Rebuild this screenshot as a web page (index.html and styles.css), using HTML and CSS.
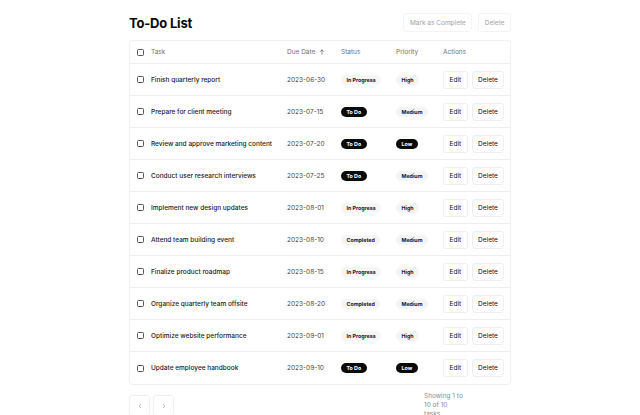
FILE: index.html
```html
<!DOCTYPE html>
<html lang="en">
<head>
<meta charset="utf-8">
<title>To-Do List</title>
<link rel="stylesheet" href="styles.css">
</head>
<body>
<div class="page">
  <div class="topbar">
    <h1 class="title">To-Do List</h1>
    <div class="top-actions">
      <button class="btn btn-muted">Mark as Complete</button>
      <button class="btn btn-muted">Delete</button>
    </div>
  </div>
  <div class="table">
    <div class="row head">
      <div class="cell"><span class="cb"></span></div>
      <div class="cell">Task</div>
      <div class="cell">Due Date <svg class="arrow" viewBox="0 0 10 10" width="6" height="6"><path d="M5 8.5V1.5M2.5 4L5 1.5 7.5 4" fill="none" stroke="currentColor" stroke-width="1.1" stroke-linecap="round" stroke-linejoin="round"/></svg></div>
      <div class="cell">Status</div>
      <div class="cell">Priority</div>
      <div class="cell">Actions</div>
    </div>
    <div class="row"><div class="cell"><span class="cb"></span></div><div class="cell task">Finish quarterly report</div><div class="cell date">2023-06-30</div><div class="cell"><span class="badge light">In Progress</span></div><div class="cell"><span class="badge light">High</span></div><div class="cell acts"><button class="btn">Edit</button><button class="btn">Delete</button></div></div>
    <div class="row"><div class="cell"><span class="cb"></span></div><div class="cell task">Prepare for client meeting</div><div class="cell date">2023-07-15</div><div class="cell"><span class="badge dark">To Do</span></div><div class="cell"><span class="badge light">Medium</span></div><div class="cell acts"><button class="btn">Edit</button><button class="btn">Delete</button></div></div>
    <div class="row"><div class="cell"><span class="cb"></span></div><div class="cell task">Review and approve marketing content</div><div class="cell date">2023-07-20</div><div class="cell"><span class="badge dark">To Do</span></div><div class="cell"><span class="badge dark">Low</span></div><div class="cell acts"><button class="btn">Edit</button><button class="btn">Delete</button></div></div>
    <div class="row"><div class="cell"><span class="cb"></span></div><div class="cell task">Conduct user research interviews</div><div class="cell date">2023-07-25</div><div class="cell"><span class="badge dark">To Do</span></div><div class="cell"><span class="badge light">Medium</span></div><div class="cell acts"><button class="btn">Edit</button><button class="btn">Delete</button></div></div>
    <div class="row"><div class="cell"><span class="cb"></span></div><div class="cell task">Implement new design updates</div><div class="cell date">2023-08-01</div><div class="cell"><span class="badge light">In Progress</span></div><div class="cell"><span class="badge light">High</span></div><div class="cell acts"><button class="btn">Edit</button><button class="btn">Delete</button></div></div>
    <div class="row"><div class="cell"><span class="cb"></span></div><div class="cell task">Attend team building event</div><div class="cell date">2023-08-10</div><div class="cell"><span class="badge light">Completed</span></div><div class="cell"><span class="badge light">Medium</span></div><div class="cell acts"><button class="btn">Edit</button><button class="btn">Delete</button></div></div>
    <div class="row"><div class="cell"><span class="cb"></span></div><div class="cell task">Finalize product roadmap</div><div class="cell date">2023-08-15</div><div class="cell"><span class="badge light">In Progress</span></div><div class="cell"><span class="badge light">High</span></div><div class="cell acts"><button class="btn">Edit</button><button class="btn">Delete</button></div></div>
    <div class="row"><div class="cell"><span class="cb"></span></div><div class="cell task">Organize quarterly team offsite</div><div class="cell date">2023-08-20</div><div class="cell"><span class="badge light">Completed</span></div><div class="cell"><span class="badge light">Medium</span></div><div class="cell acts"><button class="btn">Edit</button><button class="btn">Delete</button></div></div>
    <div class="row"><div class="cell"><span class="cb"></span></div><div class="cell task">Optimize website performance</div><div class="cell date">2023-09-01</div><div class="cell"><span class="badge light">In Progress</span></div><div class="cell"><span class="badge light">High</span></div><div class="cell acts"><button class="btn">Edit</button><button class="btn">Delete</button></div></div>
    <div class="row last"><div class="cell"><span class="cb"></span></div><div class="cell task">Update employee handbook</div><div class="cell date">2023-09-10</div><div class="cell"><span class="badge dark">To Do</span></div><div class="cell"><span class="badge dark">Low</span></div><div class="cell acts"><button class="btn">Edit</button><button class="btn">Delete</button></div></div>
  </div>
  <div class="footer">
    <div class="pager">
      <button class="pbtn" aria-label="Previous"><svg viewBox="0 0 10 10" width="6" height="6"><path d="M6.5 2L3.5 5l3 3" fill="none" stroke="currentColor" stroke-width="1.2" stroke-linecap="round" stroke-linejoin="round"/></svg></button>
      <button class="pbtn" aria-label="Next"><svg viewBox="0 0 10 10" width="6" height="6"><path d="M3.5 2l3 3-3 3" fill="none" stroke="currentColor" stroke-width="1.2" stroke-linecap="round" stroke-linejoin="round"/></svg></button>
    </div>
    <div class="showing">Showing 1 to 10 of 10 tasks</div>
  </div>
</div>
</body>
</html>
```
FILE: styles.css
```css
* { box-sizing: border-box; }
html, body { margin: 0; padding: 0; background: #ffffff; }
body {
  font-family: Inter, "Noto Sans", "Liberation Sans", sans-serif;
  color: #09090b;
}
.page {
  width: 382px;
  margin: 0 auto;
  padding-top: 12px;
}
.topbar {
  display: flex;
  align-items: center;
  justify-content: space-between;
  height: 21px;
  margin-bottom: 7px;
}
.title {
  margin: 0;
  font-size: 13px;
  font-weight: 700;
  letter-spacing: -0.2px;
}
.top-actions {
  display: flex;
  gap: 6px;
}
.btn {
  font-family: inherit;
  font-size: 6.5px;
  color: #09090b;
  background: #fff;
  border: 1px solid #efeff1;
  border-radius: 3px;
  height: 18px;
  padding: 0 5.5px;
  cursor: pointer;
}
.btn-muted {
  color: #a1a1a9;
  border-color: #f4f4f5;
  height: 19px;
}
.table {
  border: 1px solid #efeff1;
  border-radius: 4px;
  margin-top: 1px;
}
.row {
  display: grid;
  grid-template-columns: 21px 136px 54px 55px 47px 1fr;
  height: 32px;
  align-items: center;
  border-bottom: 1px solid #efeff1;
}
.row.last { border-bottom: none; }
.row.head {
  height: 23px;
  color: #71717a;
  font-size: 6.5px;
}
.cell {
  display: flex;
  align-items: center;
  font-size: 6.5px;
  white-space: nowrap;
}
.row .cell:first-child { padding-left: 7px; }
.cb {
  display: inline-block;
  width: 7px;
  height: 7px;
  border: 1px solid #52525b;
  border-radius: 1.5px;
}
.arrow { margin-left: 4px; color: #52525b; }
.task { font-weight: 500; color: #18181b; }
.date { color: #3f3f46; }
.badge {
  display: inline-block;
  font-size: 5.3px;
  font-weight: 700;
  line-height: 10px;
  padding: 0 5.5px;
  border-radius: 5px;
}
.badge.light { background: #f5f5f6; color: #18181b; }
.badge.dark { background: #09090b; color: #fff; }
.acts { gap: 4px; }
.footer {
  display: flex;
  justify-content: space-between;
  align-items: flex-start;
  margin-top: 10px;
}
.pager { display: flex; gap: 3px; }
.pbtn {
  width: 21px;
  height: 21px;
  background: #fff;
  border: 1px solid #efeff1;
  border-radius: 3px;
  color: #a1a1a9;
  display: flex;
  align-items: center;
  justify-content: center;
  padding: 0;
}
.showing {
  width: 40px;
  margin-right: 47px;
  margin-top: -3px;
  font-size: 6.5px;
  line-height: 9px;
  color: #8a8a92;
}
```
